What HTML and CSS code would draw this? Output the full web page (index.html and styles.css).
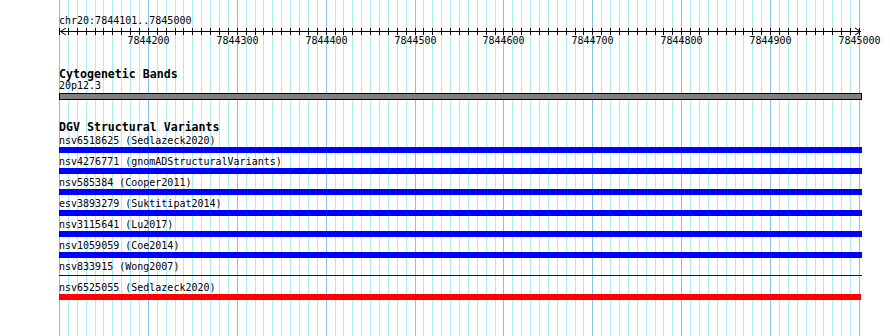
FILE: index.html
```html
<!DOCTYPE html>
<html lang="en">
<head>
    <meta charset="UTF-8">
    <title>chr20:7844101..7845000</title>
    <link rel="stylesheet" href="styles.css">
</head>
<body>

<div class="browser">
    <svg class="grid" id="grid" width="890" height="336"></svg>

    <div class="tracks">
        <div class="coords">chr20:7844101..7845000</div>
        <svg class="ruler" id="ruler" width="890" height="20"></svg>

        <div class="track-title">Cytogenetic Bands</div>
        <div class="label">20p12.3</div>
        <div class="band"></div>

        <div class="track-title dgv">DGV Structural Variants</div>
        <div class="features">
            <div class="label">nsv6518625 (Sedlazeck2020)</div>
            <div class="bar"></div>
            <div class="label">nsv4276771 (gnomADStructuralVariants)</div>
            <div class="bar"></div>
            <div class="label">nsv585384 (Cooper2011)</div>
            <div class="bar"></div>
            <div class="label">esv3893279 (Suktitipat2014)</div>
            <div class="bar"></div>
            <div class="label">nsv3115641 (Lu2017)</div>
            <div class="bar"></div>
            <div class="label">nsv1059059 (Coe2014)</div>
            <div class="bar"></div>
            <div class="label">nsv833915 (Wong2007)</div>
            <div class="bar thin"></div>
            <div class="label">nsv6525055 (Sedlazeck2020)</div>
            <div class="bar red"></div>
        </div>
    </div>
</div>

<script>
    const NS = "http://www.w3.org/2000/svg";
    const left = 59;
    const step = 8.889; // 10 bp

    function add(parent, tag, attrs, text) {
        const el = document.createElementNS(NS, tag);
        for (const k in attrs) el.setAttribute(k, attrs[k]);
        if (text) el.textContent = text;
        parent.appendChild(el);
    }

    const grid = document.getElementById("grid");
    const ruler = document.getElementById("ruler");

    for (let k = 0; k <= 90; k++) {
        const x = Math.round(left + k * step) + 0.5;
        const major = k % 10 === 0;
        add(grid, "line", { x1: x, y1: 0, x2: x, y2: 336, class: major ? "major" : "minor" });
        add(ruler, "line", { x1: x, y1: 2, x2: x, y2: 9, class: "tick" });
        if (major && k > 0) {
            add(ruler, "text", { x: x, y: 18, class: "num" }, String(7844100 + k * 10));
        }
    }

    // axis and arrow heads
    add(ruler, "line", { x1: 60, y1: 5.5, x2: 861, y2: 5.5, class: "tick" });
    add(ruler, "polyline", { points: "66,2 60.5,5.5 66,9", class: "arrow" });
    add(ruler, "polyline", { points: "855,2 860.5,5.5 855,9", class: "arrow" });
</script>

</body>
</html>
```

FILE: styles.css
```css
body {
    margin: 0;
    background-color: #fff;
}
.browser {
    position: relative;
    width: 890px;
    height: 336px;
    overflow: hidden;
}
.grid {
    position: absolute;
    top: 0;
    left: 0;
}
.grid line {
    stroke-width: 1;
    shape-rendering: crispEdges;
}
.grid .minor {
    stroke: #aaecf0;
}
.grid .major {
    stroke: #88c2e6;
}
.tracks {
    position: relative;
    padding: 15px 0 0 59px;
    font-family: "DejaVu Sans Mono", monospace;
    font-size: 10px;
    line-height: 11px;
    color: #000;
}
.coords, .label {
    white-space: pre;
}
.ruler {
    display: block;
    margin-left: -59px;
}
.ruler .tick {
    stroke: #000;
    stroke-width: 1;
    shape-rendering: crispEdges;
}
.ruler .arrow {
    fill: none;
    stroke: #000;
    stroke-width: 1;
}
.ruler .num {
    font-family: "DejaVu Sans Mono", monospace;
    font-size: 10px;
    text-anchor: middle;
    fill: #000;
}
.track-title {
    font-weight: bold;
    font-size: 11.6px;
    line-height: 12px;
    margin-top: 22px;
}
.track-title.dgv {
    margin-top: 21px;
}
.band {
    width: 801px;
    height: 5px;
    margin-top: 2px;
    border: 1px solid #000;
    background-color: #808080;
}
.features {
    margin-top: 2px;
}
.bar {
    width: 803px;
    height: 6px;
    margin: 1px 0 3px;
    background-color: #0000ff;
}
.bar.thin {
    height: 1px;
    margin: 3px 0 6px;
    background-color: #0000c8;
}
.bar.red {
    width: 802px;
    background-color: #ff0000;
}
```
